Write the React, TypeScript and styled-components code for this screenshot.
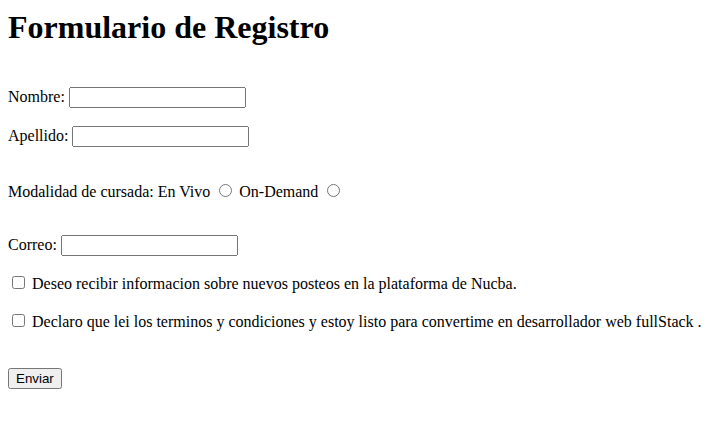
import React from "react";
import styled, { createGlobalStyle } from "styled-components";

const Global = createGlobalStyle`
  html, body {
    margin: 0;
    padding: 0;
    background: #fff;
  }
  body {
    font-family: "Liberation Serif", "Times New Roman", serif;
    font-size: 16px;
    color: #000;
  }
`;

const Page = styled.main`
  display: block;
  padding: 9px 8px 8px;
`;

const Title = styled.h1`
  font-size: 32px;
  font-weight: bold;
  line-height: 37px;
  height: 37px;
  margin: 0;
`;

const Form = styled.form`
  display: block;
`;

const Row = styled.div<{ $top: number }>`
  margin-top: ${(p) => p.$top}px;
  height: 23px;
  line-height: 23px;
  white-space: nowrap;
`;

const TextInput = styled.input`
  box-sizing: border-box;
  width: 177px;
  height: 21px;
  font-family: "Liberation Sans", Arial, sans-serif;
  font-size: 13.333px;
  line-height: normal;
`;

const Radio = styled.input`
  width: 13px;
  height: 13px;
`;

const Check = styled.input`
  width: 13px;
  height: 13px;
`;

const Button = styled.button`
  font-family: "Liberation Sans", Arial, sans-serif;
  font-size: 13.333px;
  line-height: normal;
`;

export default function App() {
  return (
    <>
      <Global />
      <Page>
        <Title>Formulario de Registro</Title>
        <Form onSubmit={(e) => e.preventDefault()}>
          <Row $top={39}>
            <label htmlFor="nombre">Nombre:</label> <TextInput id="nombre" type="text" />
          </Row>
          <Row $top={16}>
            <label htmlFor="apellido">Apellido:</label> <TextInput id="apellido" type="text" />
          </Row>
          <Row $top={33}>
            Modalidad de cursada: <label htmlFor="vivo">En Vivo</label> <Radio id="vivo" type="radio" name="modalidad" />{" "}
            <label htmlFor="demand">On-Demand</label> <Radio id="demand" type="radio" name="modalidad" />
          </Row>
          <Row $top={30}>
            <label htmlFor="correo">Correo:</label> <TextInput id="correo" type="email" />
          </Row>
          <Row $top={16}>
            <Check id="posteos" type="checkbox" />{" "}
            <label htmlFor="posteos">Deseo recibir informacion sobre nuevos posteos en la plataforma de Nucba.</label>
          </Row>
          <Row $top={15}>
            <Check id="terminos" type="checkbox" />{" "}
            <label htmlFor="terminos">
              Declaro que lei los terminos y condiciones y estoy listo para convertime en desarrollador web fullStack .
            </label>
          </Row>
          <Row $top={33}>
            <Button type="submit">Enviar</Button>
          </Row>
        </Form>
      </Page>
    </>
  );
}
